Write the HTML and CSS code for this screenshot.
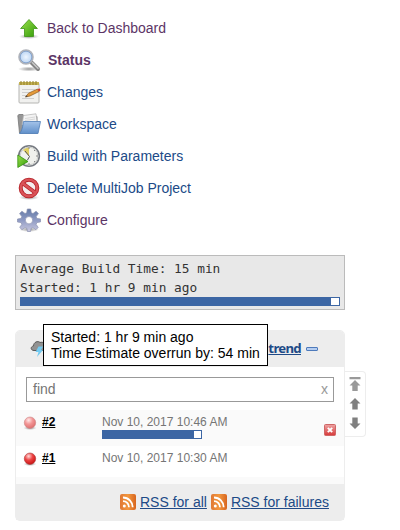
FILE: index.html
```html
<!DOCTYPE html>
<html lang="en">
<head>
<meta charset="utf-8">
<title>MultiJob Project</title>
<link rel="stylesheet" href="styles.css">
</head>
<body>
<svg class="defs" width="0" height="0">
  <defs>
    <linearGradient id="green" x2="1" y2="1"><stop offset="0" stop-color="#9be04c"/><stop offset="1" stop-color="#329b08"/></linearGradient>
    <linearGradient id="folder" x2="0" y2="1"><stop offset="0" stop-color="#a4c3e9"/><stop offset="1" stop-color="#608fc9"/></linearGradient>
    <linearGradient id="gear" x2="0" y2="1"><stop offset="0" stop-color="#6279a6"/><stop offset=".5" stop-color="#8f9bc4"/><stop offset="1" stop-color="#cac9e0"/></linearGradient>
    <linearGradient id="orange" x2="1"><stop offset="0" stop-color="#e07834"/><stop offset=".5" stop-color="#f3983e"/><stop offset="1" stop-color="#d7651f"/></linearGradient>
    <linearGradient id="stop" x2="0" y2="1"><stop offset="0" stop-color="#eda5a5"/><stop offset="1" stop-color="#d63838"/></linearGradient>
    <radialGradient id="lens"><stop offset="0" stop-color="#eef6ff"/><stop offset="1" stop-color="#b5d1f2"/></radialGradient>
    <radialGradient id="red" cx=".38" cy=".28" r=".7"><stop offset="0" stop-color="#ffdada"/><stop offset=".5" stop-color="#ed4444"/><stop offset="1" stop-color="#cc1717"/></radialGradient>
    <radialGradient id="pink" cx=".38" cy=".28" r=".7"><stop offset="0" stop-color="#ffe9e9"/><stop offset=".5" stop-color="#f39696"/><stop offset="1" stop-color="#df7272"/></radialGradient>
    <radialGradient id="shade"><stop offset="0" stop-color="#000" stop-opacity=".4"/><stop offset="1" stop-color="#000" stop-opacity="0"/></radialGradient>
  </defs>
</svg>

<nav class="tasks">
  <a class="task visited">
    <svg width="24" height="24" viewBox="0 0 24 24"><ellipse cx="12" cy="20.5" rx="10" ry="2.5" fill="url(#shade)"/><path d="M12 3.5 20.4 12.500H16.500V20.500H7.500V12.500H3.600Z" fill="url(#green)" stroke="#3d9415" stroke-width=".8"/></svg>
    <span>Back to Dashboard</span>
  </a>
  <a class="task visited current">
    <svg width="24" height="24" viewBox="0 0 24 24"><ellipse cx="12" cy="21" rx="11" ry="2.500" fill="url(#shade)"/><path d="M14.500 14.500 21 21" stroke="#858585" stroke-width="4" stroke-linecap="round"/><path d="M15.500 14.700 21 20.200" stroke="#c9c9c9" stroke-width="1.500" stroke-linecap="round"/><circle cx="9" cy="9" r="6.800" fill="url(#lens)" stroke="#b0b3ba" stroke-width="2"/><circle cx="9" cy="9" r="5.800" fill="none" stroke="#7b9fd0" stroke-width=".8"/></svg>
    <span>Status</span>
  </a>
  <a class="task">
    <svg width="24" height="24" viewBox="0 0 24 24"><rect x="2" y="3" width="20" height="20" rx="1" fill="#f1f1ef" stroke="#b5b5b2"/><path d="M2 2H22V5H2Z" fill="#c4b253"/><path d="M4 1v4M7 1v4M10 1v4M13 1v4M16 1v4M19 1v4" stroke="#927f2c"/><path d="M5 9.500h13M5 12.500h10M5 15.500h7M5 18.500h12" stroke="#cfcfcf"/><path d="M8.500 17 11.500 13.200 20.500 9 22 11.500 13 16Z" fill="#e59a3a" stroke="#8a5b22" stroke-width=".7"/><path d="M20.500 9 23 8.500 23.500 10.500 22 11.500Z" fill="#d83a2b"/><path d="M8 17.200 10 15.200 10.500 16.500Z" fill="#333"/></svg>
    <span>Changes</span>
  </a>
  <a class="task">
    <svg width="24" height="24" viewBox="0 0 24 24"><path d="M.8 3.500 2 2.500H6L7.500 4.500H20V21H2.500Z" fill="#969696" stroke="#777" stroke-width=".8"/><path d="M6.500 3.500 19 1.800 20.500 13H5Z" fill="#f3f3f3" stroke="#b0b0b0" stroke-width=".7"/><path d="M8 6.500 18 5M8 8.500 18 7" stroke="#ccc" stroke-width=".7"/><path d="M6.500 9.500H23.500L21 21.500H2.500C4 20 5.500 17 6.500 9.500Z" fill="url(#folder)" stroke="#4f7db7" stroke-width=".8"/></svg>
    <span>Workspace</span>
  </a>
  <a class="task">
    <svg width="24" height="24" viewBox="0 0 24 24"><circle cx="12" cy="12" r="10.300" fill="#f0f1ed" stroke="#777b82" stroke-width="1.600"/><circle cx="12" cy="12" r="8.800" fill="none" stroke="#c9cbc9"/><path d="M12 12V3.500A8.500 8.500 0 0 0 6 6Z" fill="#dfcd62"/><path d="M8 7 12.500 12.500 10.500 16" fill="none" stroke="#555"/><path d="M12 3v2M12 19v2M19 12h2M18 6l-1 1M18 18l-1-1" stroke="#888"/><path d="M.8 11 11 17.500.8 23.500Z" fill="url(#green)" stroke="#34900f" stroke-width=".8"/></svg>
    <span>Build with Parameters</span>
  </a>
  <a class="task">
    <svg width="24" height="24" viewBox="0 0 24 24"><ellipse cx="12" cy="21.500" rx="10" ry="2.500" fill="url(#shade)"/><circle cx="12" cy="12" r="8.300" fill="#f4eeee" stroke="#b52329" stroke-width="4"/><path d="M6 7.500 18 16.500" stroke="#b52329" stroke-width="4"/><circle cx="12" cy="12" r="8.300" fill="none" stroke="#da5358" stroke-width="2.300"/><path d="M6 7.500 18 16.500" stroke="#da5358" stroke-width="2.300"/></svg>
    <span>Delete MultiJob Project</span>
  </a>
  <a class="task visited">
    <svg width="24" height="24" viewBox="0 0 24 24"><ellipse cx="12" cy="21.500" rx="10" ry="2.500" fill="url(#shade)"/><path fill-rule="evenodd" d="M10.300 1h3.400l.6 3.800 1.700.7 3.100-2.300 2.300 2.400-2.200 3 .7 1.800 3.600.5v3l-3.600.7-.8 1.800 2.100 3-2.300 2.300-3-2.100-1.700.7-.7 3.200h-3l-.7-3.200-1.800-.7-3 2.100-2.300-2.300 2.100-3-.7-1.800L.5 14v-3l3.600-.6.7-1.800-2.200-3 2.300-2.400L8 5.500l1.700-.7ZM12 8.500a3.700 3.700 0 1 0 0 7.400 3.700 3.700 0 0 0 0-7.400Z" fill="url(#gear)" stroke="#8a90b0" stroke-width=".7"/></svg>
    <span>Configure</span>
  </a>
</nav>

<section class="estimate">
  <div>Average Build Time: 15 min</div>
  <div>Started: 1 hr 9 min ago</div>
  <div class="bar"><div class="fill"></div></div>
</section>

<section class="history">
  <header class="head">
    <svg class="weather" width="18" height="18" viewBox="0 0 18 18"><path d="M4 10.500C.5 10.500.2 6.500 3.500 6 3.500 2 8 .5 10 2.500c3-1 5 1 5 3.500 3 1 2 5-1 4.500Z" fill="#929292" stroke="#5a5a5a"/><path d="M8.500 6.500H13L11 10H13L7 17 8.500 12H5.500Z" fill="#73cbf2"/></svg>
    <a class="trend">trend</a>
    <span class="collapse"></span>
    <div class="tip">Started: 1 hr 9 min ago<br>Time Estimate overrun by: 54 min</div>
  </header>
  <div class="search"><span>find</span><span class="clear">x</span></div>
  <div class="build running">
    <svg class="ball" width="14" height="14" viewBox="0 0 14 14"><ellipse cx="7" cy="12" rx="6.500" ry="2" fill="url(#shade)"/><circle cx="7" cy="6.700" r="5.700" fill="url(#pink)" stroke="#cc8585" stroke-width=".6"/></svg>
    <a class="number">#2</a>
    <div class="when">Nov 10, 2017 10:46 AM<div class="bar small"><div class="fill"></div></div></div>
    <svg class="abort" width="12" height="12" viewBox="0 0 12 12"><rect x=".5" y=".5" width="11" height="11" rx="1" fill="url(#stop)" stroke="#cf6666"/><path d="M3.800 3.800 8.200 8.200M8.200 3.800 3.800 8.200" stroke="#fff" stroke-width="1.900"/></svg>
  </div>
  <div class="build">
    <svg class="ball" width="14" height="14" viewBox="0 0 14 14"><ellipse cx="7" cy="12" rx="6.500" ry="2" fill="url(#shade)"/><circle cx="7" cy="6.700" r="5.700" fill="url(#red)" stroke="#a93838" stroke-width=".6"/></svg>
    <a class="number">#1</a>
    <div class="when">Nov 10, 2017 10:30 AM</div>
  </div>
  <div class="strip"></div>
  <footer class="feeds">
    <svg width="16" height="16" viewBox="0 0 16 16"><rect width="16" height="16" rx="2" fill="url(#orange)"/><circle cx="4.300" cy="11.900" r="1.500" fill="#fff"/><path d="M3 7.200a6 6 0 0 1 6 6M3 3.500a9.700 9.700 0 0 1 9.700 9.700" fill="none" stroke="#fff" stroke-width="1.800"/></svg>
    <a class="all">RSS for all</a>
    <svg width="16" height="16" viewBox="0 0 16 16"><rect width="16" height="16" rx="2" fill="url(#orange)"/><circle cx="4.300" cy="11.900" r="1.500" fill="#fff"/><path d="M3 7.200a6 6 0 0 1 6 6M3 3.500a9.700 9.700 0 0 1 9.700 9.700" fill="none" stroke="#fff" stroke-width="1.800"/></svg>
    <a>RSS for failures</a>
  </footer>
  <div class="pager">
    <svg width="12" height="14" viewBox="0 0 12 14"><path d="M.5 0h11v2.300H.5ZM6 3 11.500 8.500H8.700V14H3.300V8.500H.5Z" fill="#999"/></svg>
    <svg width="12" height="12" viewBox="0 0 12 12"><path d="M6 0 11.500 5.500H8.700V11.500H3.300V5.500H.5Z" fill="#808080"/></svg>
    <svg width="12" height="12" viewBox="0 0 12 12"><path d="M6 12 11.500 6.500H8.700V.5H3.300V6.500H.5Z" fill="#808080"/></svg>
  </div>
</section>
</body>
</html>
```
FILE: styles.css
```css
* { box-sizing: border-box; }
body {
  margin: 0;
  padding: 12px 0 0 15px;
  height: 530px;
  overflow: hidden;
  background: #fff;
  font: 14px/16px "Liberation Sans", Arial, sans-serif;
}
svg { display: block; flex: none; }
.defs { position: absolute; }
.tasks { padding-left: 2px; }
.task {
  display: flex;
  align-items: center;
  gap: 6px;
  height: 32px;
  color: #204a87;
}
.visited { color: #5c3566; }
.current { font-weight: bold; gap: 7px; }

.estimate {
  width: 330px;
  height: 55px;
  margin-top: 19px;
  padding: 3px 4px;
  background: #e8e8e8;
  border: 1px solid #bbb;
  color: #333;
  font: 12.8px/19px "DejaVu Sans Mono", monospace;
}
.bar {
  height: 9px;
  border: 1px solid #3c66a4;
  background: #fff;
}
.fill { height: 100%; width: 310px; background: #3c66a4; }

.history {
  position: relative;
  width: 330px;
  height: 191px;
  margin-top: 20px;
  border: 1px solid #ededed;
  border-radius: 5px;
}
.head {
  position: relative;
  display: flex;
  align-items: center;
  height: 36px;
  padding: 0 26px 0 14px;
  background: #ededed;
  border-radius: 4px 4px 0 0;
}
.trend {
  margin: -2px 0 0 auto;
  font: bold 13.2px/18px "Noto Sans", "Open Sans", sans-serif;
  letter-spacing: -0.7px;
  color: #204a87;
  text-decoration: underline;
}
.collapse {
  width: 12px;
  height: 4px;
  margin-left: 5px;
  border: 1px solid #4e7abb;
  border-radius: 1px;
  background: #b5cdf0;
}
.tip {
  position: absolute;
  left: 27px;
  top: -7px;
  width: 225px;
  height: 42px;
  padding: 4px 7px;
  border: 1px solid #000;
  background: #fff;
  color: #000;
  white-space: nowrap;
}
.search {
  display: flex;
  justify-content: space-between;
  height: 25px;
  margin: 10px 10px 8px;
  padding: 3px 5px 0 6px;
  border: 1px solid #999;
  color: #757575;
}
.clear { color: #999; }
.build {
  display: flex;
  height: 31px;
  padding: 4px 8px 0 7px;
  font-size: 12px;
}
.running { height: 36px; background: #fafafa; }
.ball { margin-top: 2px; }
.number {
  width: 65px;
  padding-left: 5px;
  color: #000;
  font-weight: bold;
  text-decoration: underline;
}
.when { color: #757575; }
.small { width: 100px; }
.small .fill { width: 91px; }
.abort { margin: 10px 0 0 auto; }
.strip { height: 7px; background: #fafafa; }
.feeds {
  display: flex;
  align-items: center;
  gap: 4px;
  height: 36px;
  padding-left: 104px;
  background: #ededed;
}
.feeds a { color: #204a87; text-decoration: underline; }
.pager {
  position: absolute;
  left: 328px;
  top: 40px;
  display: flex;
  flex-direction: column;
  align-items: center;
  gap: 7px;
  width: 22px;
  height: 66px;
  padding-top: 5px;
  border: 1px solid #ededed;
  border-left: 0;
  border-radius: 0 4px 4px 0;
}
```
